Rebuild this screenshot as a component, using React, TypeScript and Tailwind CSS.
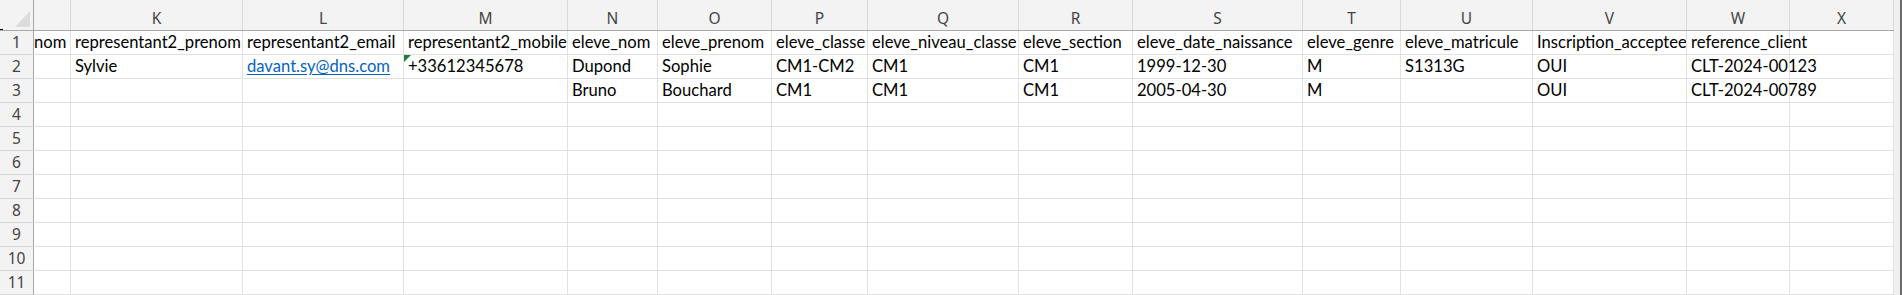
import React from "react";

const widths = [
  "w-[34px]", "w-[37px]", "w-[172px]", "w-[161px]", "w-[164px]", "w-[90px]", "w-[114px]",
  "w-[96px]", "w-[151px]", "w-[114px]", "w-[170px]", "w-[98px]", "w-[132px]", "w-[154px]",
  "w-[103px]", "w-[104px]",
];

const letters = ["", "", "K", "L", "M", "N", "O", "P", "Q", "R", "S", "T", "U", "V", "W", "X"];

type Cell = string | { link: string } | { flag: string };

const rows: Cell[][] = [
  [
    "nom", "representant2_prenom", "representant2_email", "representant2_mobile",
    "eleve_nom", "eleve_prenom", "eleve_classe", "eleve_niveau_classe", "eleve_section",
    "eleve_date_naissance", "eleve_genre", "eleve_matricule", "Inscription_acceptee", "reference_client", "",
  ],
  [
    "", "Sylvie", { link: "davant.sy@dns.com" }, { flag: "+33612345678" }, "Dupond", "Sophie", "CM1-CM2",
    "CM1", "CM1", "1999-12-30", "M", "S1313G", "OUI", "CLT-2024-00123", "",
  ],
  [
    "", "", "", "", "Bruno", "Bouchard", "CM1", "CM1", "CM1", "2005-04-30", "M", "", "OUI", "CLT-2024-00789", "",
  ],
];

const cellFont = "font-['Lato','Open_Sans',sans-serif] text-[16.6px] text-black";
const headFont = "font-['Noto_Sans','Open_Sans',sans-serif] text-[15.5px] text-[#444444]";

function CellContent({ c, first }: { c: Cell; first: boolean }) {
  if (typeof c === "string")
    return <span className={`${first ? "pl-0" : "pl-[4px]"} whitespace-nowrap`}>{c}</span>;
  if ("link" in c)
    return <span className="pl-[4px] whitespace-nowrap text-[#0563c1] underline underline-offset-[2px]">{c.link}</span>;
  return (
    <>
      <span className="absolute left-0 top-0 w-0 h-0 border-t-[7px] border-t-[#1a7f37] border-r-[7px] border-r-transparent" />
      <span className="pl-[4px] whitespace-nowrap">{c.flag}</span>
    </>
  );
}

export default function App() {
  return (
    <div className="w-[1902px] h-[295px] overflow-hidden bg-white flex relative">
      <div className="absolute left-0 top-[29px] w-[3px] h-[1px] bg-black" />
      <div className="flex flex-col w-[1894px]">
        <div className="flex h-[31px] bg-[#f3f3f3] border-b border-[#a8a8a8]">
          {letters.map((l, i) => (
            <div
              key={i}
              className={`${widths[i]} shrink-0 h-full flex items-center justify-center pt-[8px] ${headFont} ${
                i === 0 ? "border-r border-[#a8a8a8] relative" : "border-r border-[#dadada]"
              }`}
            >
              {i === 0 ? (
                <span className="absolute left-[15px] top-[11px] w-0 h-0 border-b-[16px] border-b-[#dcdcdc] border-l-[15px] border-l-transparent" />
              ) : (
                l
              )}
            </div>
          ))}
        </div>
        {Array.from({ length: 11 }).map((_, r) => (
          <div key={r} className="flex h-[24px] shrink-0">
            <div
              className={`${widths[0]} shrink-0 h-full flex items-center justify-center bg-[#f3f3f3] border-r border-b border-r-[#a8a8a8] border-b-[#dadada] ${headFont}`}
            >
              {r + 1}
            </div>
            {widths.slice(1).map((w, ci) => {
              const c: Cell = rows[r] ? rows[r][ci] : "";
              const spill = ci === 13;
              return (
                <div
                  key={ci}
                  className={`${w} shrink-0 h-full relative ${spill ? "overflow-visible" : "overflow-hidden"} flex items-center border-r border-b border-[#e1e1e1] ${cellFont}`}
                >
                  <CellContent c={c} first={ci === 0} />
                </div>
              );
            })}
          </div>
        ))}
      </div>
      <div className="w-[8px] h-full bg-[#f0f0f0] flex justify-end">
        <div className="w-[2px] h-full bg-[#6b6b6b]" />
      </div>
    </div>
  );
}
